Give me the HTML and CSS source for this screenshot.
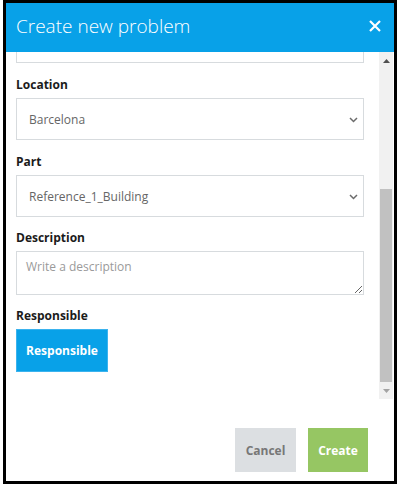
FILE: index.html
```html
<!DOCTYPE html>
<html lang="en">
<head>
<meta charset="utf-8">
<title>Create new problem</title>
<link rel="stylesheet" href="styles.css">
</head>
<body>
<div class="modal">
  <header class="modal-header">
    <h1 class="modal-title">Create new problem</h1>
    <span class="close" aria-label="Close">
      <svg width="12" height="12" viewBox="0 0 12 12"><path d="M1 1 L11 11 M11 1 L1 11" stroke="#fff" stroke-width="2.2" fill="none"/></svg>
    </span>
  </header>
  <div class="modal-body">
    <div class="form">
      <div class="input-stub"></div>
      <label class="label">Location</label>
      <div class="select">
        <span class="select-value">Barcelona</span>
        <svg class="chevron" width="9" height="6" viewBox="0 0 9 6"><path d="M1 1 L4.5 4.5 L8 1" stroke="#6b6b6b" stroke-width="1.5" fill="none"/></svg>
      </div>
      <label class="label">Part</label>
      <div class="select">
        <span class="select-value">Reference_1_Building</span>
        <svg class="chevron" width="9" height="6" viewBox="0 0 9 6"><path d="M1 1 L4.5 4.5 L8 1" stroke="#6b6b6b" stroke-width="1.5" fill="none"/></svg>
      </div>
      <label class="label label-tight">Description</label>
      <textarea class="textarea" placeholder="Write a description"></textarea>
      <label class="label label-tight">Responsible</label>
      <button class="btn btn-primary">Responsible</button>
    </div>
    <div class="scrollbar">
      <div class="sb-arrow">
        <svg width="7" height="4" viewBox="0 0 7 4"><path d="M0 4 L3.5 0 L7 4 Z" fill="#505050"/></svg>
      </div>
      <div class="sb-track"><div class="sb-thumb"></div></div>
      <div class="sb-arrow">
        <svg width="7" height="4" viewBox="0 0 7 4"><path d="M0 0 L7 0 L3.5 4 Z" fill="#a3a3a3"/></svg>
      </div>
    </div>
  </div>
  <footer class="modal-footer">
    <button class="btn btn-cancel">Cancel</button>
    <button class="btn btn-create">Create</button>
  </footer>
</div>
</body>
</html>
```
FILE: styles.css
```css
* { box-sizing: border-box; }
html, body { margin: 0; padding: 0; background: #fff; }
body { font-family: "Open Sans", "DejaVu Sans", sans-serif; }

.modal {
  margin-left: 3px;
  width: 394px;
  height: 484px;
  border: 3px solid #000;
  background: #fff;
  display: flex;
  flex-direction: column;
}

.modal-header {
  height: 49px;
  flex: none;
  background: #08a1e8;
  display: flex;
  align-items: center;
  justify-content: space-between;
  padding: 0 13px 3px 10px;
}
.modal-title {
  margin: 0;
  font-size: 19px;
  font-weight: 300;
  color: #fff;
  line-height: 24px;
}
.close { display: flex; margin-top: -1px; }

.modal-body {
  height: 347px;
  flex: none;
  display: flex;
  overflow: hidden;
}
.form {
  flex: 1;
  padding: 0 15px 0 10px;
  display: flex;
  flex-direction: column;
  align-items: flex-start;
}
.input-stub {
  width: 100%;
  height: 11px;
  flex: none;
  border: 1px solid #d7dbde;
  border-top: none;
}
.label {
  display: block;
  margin: 14px 0 5px;
  font-size: 12px;
  font-weight: 700;
  line-height: 16px;
  color: #1b1b1b;
}
.label-tight { margin-top: 13px; }
.select {
  width: 100%;
  height: 42px;
  flex: none;
  border: 1px solid #d7dbde;
  display: flex;
  align-items: center;
  justify-content: space-between;
  padding: 0 5px 0 12px;
}
.select-value {
  font-size: 12px;
  color: #666;
}
.chevron { margin-top: 1px; }

.textarea {
  width: 100%;
  height: 44px;
  flex: none;
  border: 1px solid #d7dbde;
  padding: 6px 9px;
  font-family: "Open Sans", "DejaVu Sans", sans-serif;
  font-size: 12px;
  color: #666;
  outline: none;
  margin: 0;
}
.textarea::placeholder { color: #9a9a9a; }

.btn {
  border: none;
  font-family: "Open Sans", "DejaVu Sans", sans-serif;
  font-size: 12px;
  font-weight: 700;
  padding: 0;
  margin: 0;
  cursor: pointer;
}
.btn-primary {
  width: 92px;
  height: 43px;
  background: #08a1e8;
  border: 1px solid #3bb3ee;
  color: #fff;
}

.scrollbar {
  width: 14px;
  flex: none;
  margin-right: 1px;
  background: #f1f1f1;
  display: flex;
  flex-direction: column;
}
.sb-arrow {
  height: 17px;
  flex: none;
  display: flex;
  align-items: center;
  justify-content: center;
}
.sb-track {
  flex: 1;
  display: flex;
  flex-direction: column;
  justify-content: flex-end;
}
.sb-thumb {
  height: 193px;
  margin: 0 1px;
  background: #c1c1c1;
}

.modal-footer {
  flex: 1;
  display: flex;
  justify-content: flex-end;
  align-items: flex-start;
  gap: 12px;
  padding: 29px 26px 0 0;
}
.btn-cancel {
  width: 61px;
  height: 44px;
  background: #dcdfe2;
  color: #777;
}
.btn-create {
  width: 60px;
  height: 44px;
  background: #96c663;
  color: #fff;
}
```
